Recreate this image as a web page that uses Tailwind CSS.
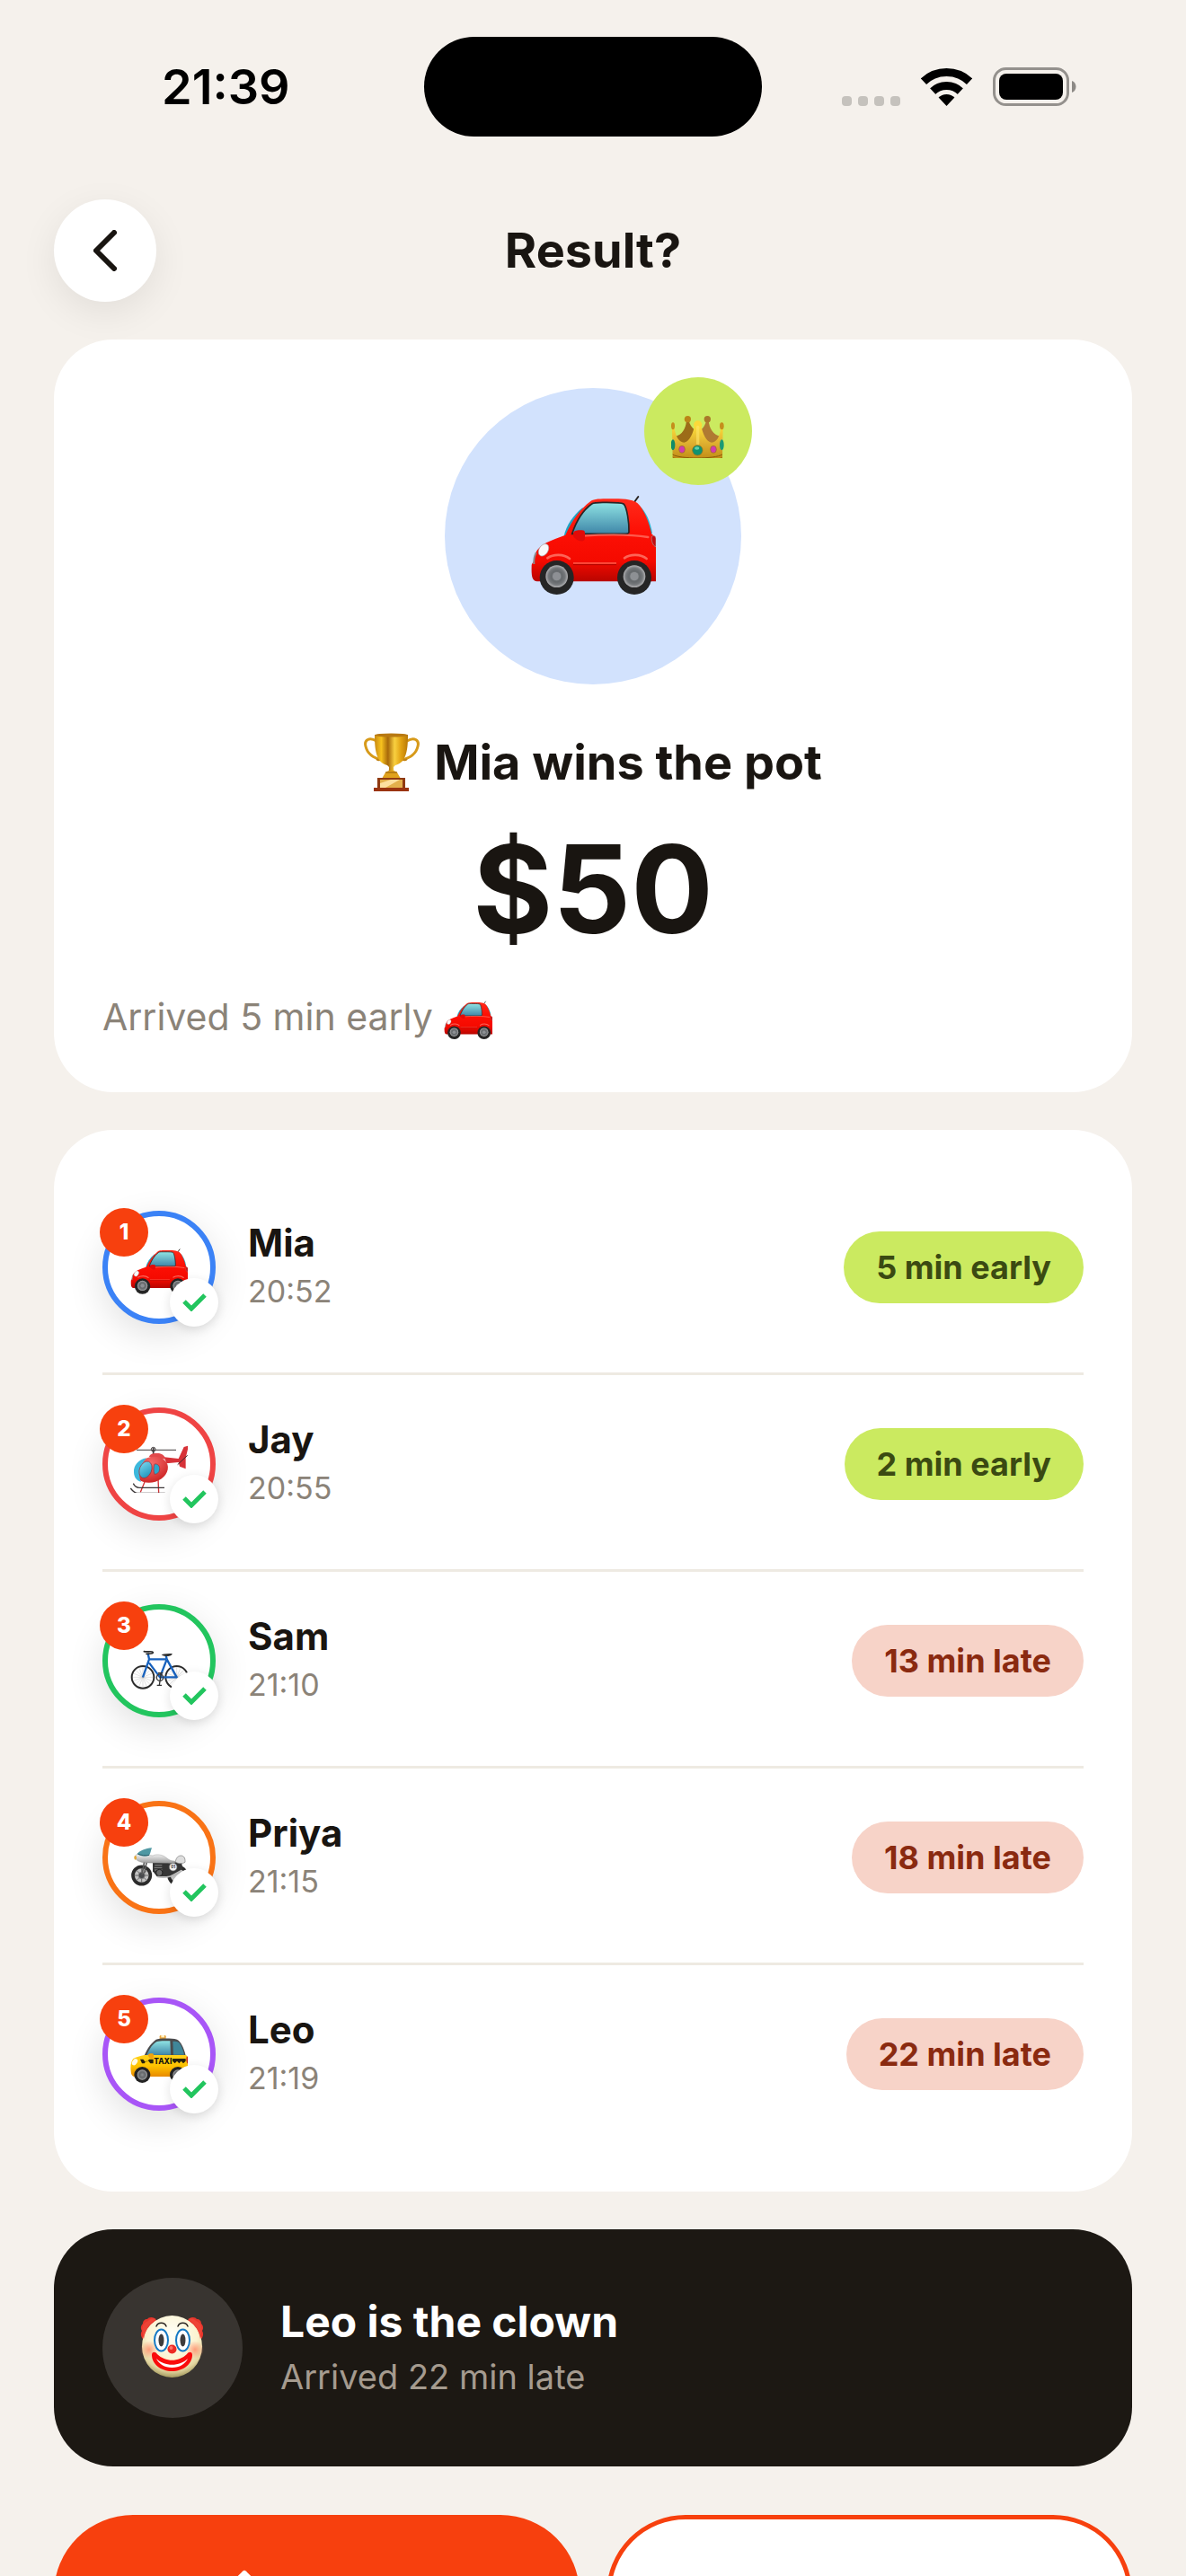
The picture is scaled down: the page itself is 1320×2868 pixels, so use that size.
<!DOCTYPE html>
<html lang="en">
<head>
  <meta charset="UTF-8">
  <meta name="viewport" content="width=device-width, initial-scale=1.0">
  <title>Result</title>
  <script src="https://cdn.jsdelivr.net/npm/@tailwindcss/browser@4"></script>
</head>
<body class="h-screen overflow-hidden bg-[#f5f1ec] font-['Inter',sans-serif] text-[#191511]">

  <!-- Shared pictures -->
  <svg class="absolute h-0 w-0" aria-hidden="true">
    <defs>
      <linearGradient id="glass" x1="0" y1="0" x2="0" y2="1">
        <stop offset="0" stop-color="#8fe3e3"/>
        <stop offset="1" stop-color="#3f86a8"/>
      </linearGradient>
      <linearGradient id="red" x1="0" y1="0" x2="0" y2="1">
        <stop offset="0" stop-color="#ff2a1a"/>
        <stop offset="0.4" stop-color="#fd1005"/>
        <stop offset="0.75" stop-color="#f50a00"/>
        <stop offset="1" stop-color="#b80500"/>
      </linearGradient>
      <linearGradient id="taxi" x1="0" y1="0" x2="0" y2="1">
        <stop offset="0" stop-color="#ffd21a"/>
        <stop offset="0.5" stop-color="#ffc400"/>
        <stop offset="1" stop-color="#e88a00"/>
      </linearGradient>
      <linearGradient id="gold" x1="0" y1="0" x2="1" y2="0">
        <stop offset="0" stop-color="#c98a10"/>
        <stop offset="0.2" stop-color="#f7c21e"/>
        <stop offset="0.4" stop-color="#a8690a"/>
        <stop offset="0.6" stop-color="#f9d040"/>
        <stop offset="0.8" stop-color="#e0a010"/>
        <stop offset="1" stop-color="#b87808"/>
      </linearGradient>
      <linearGradient id="crownGold" x1="0" y1="0" x2="0" y2="1">
        <stop offset="0" stop-color="#ffe23a"/>
        <stop offset="0.5" stop-color="#dfb030"/>
        <stop offset="1" stop-color="#bd8712"/>
      </linearGradient>
      <linearGradient id="silver" x1="0" y1="0" x2="0" y2="1">
        <stop offset="0" stop-color="#f4f4f4"/>
        <stop offset="1" stop-color="#9b9b9b"/>
      </linearGradient>
      <linearGradient id="bubble" x1="0" y1="0" x2="1" y2="1">
        <stop offset="0" stop-color="#7fdcf2"/>
        <stop offset="1" stop-color="#168bb4"/>
      </linearGradient>
      <radialGradient id="heliBody" cx="0.5" cy="0.25" r="0.7">
        <stop offset="0" stop-color="#f87070"/>
        <stop offset="1" stop-color="#d02a2a"/>
      </radialGradient>
      <radialGradient id="hub">
        <stop offset="0" stop-color="#8c8f92"/>
        <stop offset="0.5" stop-color="#65696c"/>
        <stop offset="0.75" stop-color="#75787b"/>
        <stop offset="1" stop-color="#b0b0b2"/>
      </radialGradient>
      <radialGradient id="face" cx="0.5" cy="0.3" r="0.7">
        <stop offset="0" stop-color="#fffff8"/>
        <stop offset="0.6" stop-color="#fbf3d0"/>
        <stop offset="0.85" stop-color="#e3d6a0"/>
        <stop offset="1" stop-color="#a59b60"/>
      </radialGradient>
      <radialGradient id="blush">
        <stop offset="0" stop-color="#ff8a68" stop-opacity="0.8"/>
        <stop offset="1" stop-color="#ff8a68" stop-opacity="0"/>
      </radialGradient>
      <clipPath id="signal"><path d="M28.500 42 -14 -3.500H71Z"/></clipPath>
    </defs>

    <symbol id="car" viewBox="330 381 420 420" overflow="visible">
      <path d="M676 480 691 459" stroke="#2b2523" stroke-width="6" stroke-linecap="round"/>
      <path d="M443 590c8-35 30-68 62-94l10 10-40 80z" fill="#1ea3c4"/>
      <path d="M695 490c20 15 38 55 43 92l-14 4-25-80z" fill="#28b5d0"/>
      <path d="M335 690c0-8 6-10 9-20 0-26 14-42 40-57 20-10 43-18 64-26 22-48 48-86 84-113 12-8 30-8 66-8 36 0 72 0 90 14 22 20 38 62 48 104 8 4 14 14 14 28v130H352c-16-2-18-20-17-52z" fill="url(#red)"/>
      <path d="M470 583c14-42 38-80 66-100 8-6 20-5 50-5 26 0 48 0 56 5 12 10 19 68 18 94 0 4-4 6-10 6z" fill="url(#glass)" stroke="#292526" stroke-width="5"/>
      <path d="M504 590c70-5 160-6 220 4" fill="none" stroke="#ff7a6c" stroke-width="7" stroke-linecap="round" opacity="0.7"/>
      <path d="M474 681h144" stroke="#ff5b4a" stroke-width="4"/>
      <path d="M474 686h144" stroke="#b00600" stroke-width="3"/>
      <path d="M350 646c-6 12-8 28-7 38" fill="none" stroke="#8b8b8f" stroke-width="6"/>
      <ellipse cx="375" cy="637" rx="15" ry="22" transform="rotate(32 375 637)" fill="#f8f8fa" stroke="#a9a4a8" stroke-width="2"/>
      <path d="M736 592c8-6 14 0 14 8v26c-10-2-16-20-14-34z" fill="#c20b10" stroke="#9f9b9c" stroke-width="2"/>
      <path d="M474 580c4-9 14-9 26-9 10 0 13 2 13 10v16c0 8-5 11-14 10-12-1-16-8-24-14z" fill="#e20a08"/>
      <path d="M388 664c20-14 54-14 74 2M645 664c20-14 54-14 74 2" fill="none" stroke="#ff8a7c" stroke-width="8" stroke-linecap="round" opacity="0.7"/>
      <circle cx="419" cy="729" r="57" fill="#252525"/>
      <circle cx="419" cy="725" r="37" fill="url(#hub)"/>
      <circle cx="419" cy="725" r="14" fill="#8d9094"/>
      <circle cx="678" cy="729" r="57" fill="#252525"/>
      <circle cx="678" cy="725" r="37" fill="url(#hub)"/>
      <circle cx="678" cy="725" r="14" fill="#8d9094"/>
    </symbol>

    <symbol id="crown" viewBox="801 150 180 180" overflow="visible">
      <path d="M814 258c24-6 36-26 38-54h8c2 14 10 24 20 32l-10 54h-50z" fill="#9c6c18"/>
      <path d="M966 258c-24-6-38-26-40-54h-8c-2 14-8 24-18 32l10 54h50z" fill="#b07a32"/>
      <circle cx="856" cy="200" r="11" fill="#bb8517"/>
      <circle cx="922" cy="200" r="11" fill="#a9782a"/>
      <path d="M804 232h8c4 24 14 46 32 46 18-2 30-30 36-60h20c6 30 18 58 36 60 18 0 28-22 30-46h8l-2 94c-20 20-146 20-166 0z" fill="url(#crownGold)"/>
      <circle cx="890" cy="219" r="14" fill="#fbd93a"/>
      <path d="M890 226v56" stroke="#ffe66a" stroke-width="10" stroke-linecap="round" opacity="0.6"/>
      <ellipse cx="807" cy="223" rx="6" ry="12" fill="#c58f1c"/>
      <ellipse cx="970" cy="223" rx="7" ry="12" fill="#c58f1c"/>
      <path d="M806 318c24 16 140 16 166 0" fill="none" stroke="#8a5c08" stroke-width="3"/>
      <path d="M806 325c24 18 140 18 166 0v4c-24 17-142 17-166 0z" fill="#a8740c"/>
      <ellipse cx="807" cy="286" rx="7" ry="18" fill="#118b68"/>
      <ellipse cx="970" cy="286" rx="7" ry="18" fill="#1a9b74"/>
      <ellipse cx="837" cy="301" rx="10" ry="12" fill="#d23ab0" stroke="#96701c" stroke-width="2"/>
      <ellipse cx="942" cy="301" rx="10" ry="12" fill="#d23ab0" stroke="#96701c" stroke-width="2"/>
      <circle cx="889" cy="304" r="17" fill="#0e9270" stroke="#96701c" stroke-width="2"/>
      <ellipse cx="887" cy="297" rx="8" ry="5" fill="#5fd0aa"/>
    </symbol>

    <symbol id="trophy" viewBox="0 0 62 66">
      <path d="M14 9C6 4 0 8 2 15c2 9 9 13 18 15M48 9c8-5 14-1 12 6-2 9-9 13-18 15" fill="none" stroke="#d79a1a" stroke-width="3"/>
      <path d="M14 29c3 3 6 0 4-3M48 29c-3 3-6 0-4-3" fill="none" stroke="#c08012" stroke-width="2"/>
      <path d="M12 2h37c0 15-1 31-14 34l-2 2c0 6 1 9 5 13H23c4-3 5-7 5-13l-2-2C13 33 12 17 12 2z" fill="url(#gold)"/>
      <ellipse cx="30.500" cy="2.500" rx="18.500" ry="2" fill="#b87912"/>
      <path d="M24 44c4-3 9-3 13 0l4 7H20z" fill="#e0a21c"/>
      <path d="M24 44h13" stroke="#8f5a08" stroke-width="1"/>
      <path d="M15 50h31v12H15z" fill="#8f3a10"/>
      <path d="M18 52h25v9H18z" fill="#e3b04c"/>
      <path d="M18 56 30 52h10L24 61h-6z" fill="#fde0a0"/>
      <path d="M11 61h39v4H11z" fill="#9a3410"/>
    </symbol>

    <symbol id="helicopter" viewBox="159 174 192 192" overflow="visible">
      <path d="M180 223h132" stroke="#403b3c" stroke-width="3"/>
      <path d="M236 216v22" stroke="#403b3c" stroke-width="5"/>
      <circle cx="236" cy="221" r="7" fill="none" stroke="#403b3c" stroke-width="3"/>
      <path d="M272 247 320 252 338 213 354 208 344 250 344 286 324 278 320 264 280 268z" fill="#d73238"/>
      <path d="M317 272 350 241" stroke="#37292b" stroke-width="3"/>
      <path d="M207 330 193 364M252 320 254 366" stroke="#cf2f33" stroke-width="4"/>
      <path d="M169 335c4 8 10 14 20 14h84M160 351c6 8 12 16 22 16h93" fill="none" stroke="#3c3738" stroke-width="4"/>
      <path d="M222 246c2-10 14-13 28-12 14 0 24 8 28 20z" fill="#e2494b"/>
      <ellipse cx="230" cy="289" rx="56" ry="42" transform="rotate(-18 230 289)" fill="url(#heliBody)"/>
      <path d="M213 250c-26 4-44 26-42 48 1 18 10 28 24 32-10-18-6-54 18-80z" fill="#3cb8dc"/>
      <ellipse cx="210" cy="289" rx="20" ry="29" transform="rotate(22 210 289)" fill="url(#bubble)" stroke="#a32a30" stroke-width="2"/>
      <path d="M240 270c10-2 18 6 17 18-1 10-8 16-17 16-4-10-4-24 0-34z" fill="#2aa6cc" stroke="#a32a30" stroke-width="2"/>
    </symbol>

    <symbol id="bicycle" viewBox="159 171 192 192" overflow="visible">
      <g fill="none" stroke="#a8a8a8" stroke-width="1">
        <path d="M201 285v74M164 322h74M175 296l52 52M175 348l52-52M187 288l28 68M187 356l28-68M167 308l68 28M167 336l68-28"/>
        <path d="M314 285v74M277 322h74M288 296l52 52M288 348l52-52M300 288l28 68M300 356l28-68M280 308l68 28M280 336l68-28"/>
      </g>
      <circle cx="201" cy="322" r="37" fill="none" stroke="#2c2c2c" stroke-width="6"/>
      <circle cx="314" cy="322" r="37" fill="none" stroke="#2c2c2c" stroke-width="6"/>
      <path d="M201 322 222 262 218 242M222 262H281M222 274 258 322 281 262M281 262 314 322H260M281 262 278 250" fill="none" stroke="#1761bd" stroke-width="7" stroke-linejoin="round"/>
      <path d="M205 236c10 2 20-1 27 1 6 2 2 6-4 6l-15 1" fill="none" stroke="#2a2a2a" stroke-width="5" stroke-linecap="round"/>
      <path d="M263 247c10-4 22-4 36-4 0 6-8 9-16 9-6 0-14 0-20-5z" fill="#303030"/>
      <circle cx="258" cy="323" r="11" fill="none" stroke="#3b3b3b" stroke-width="4"/>
      <path d="M262 310 256 348M248 349h16M252 308h16" stroke="#333" stroke-width="4"/>
    </symbol>

    <symbol id="motorcycle" viewBox="159 168 192 192" overflow="visible">
      <circle cx="197" cy="324" r="29" fill="#c4c4c4" stroke="#2b2b2b" stroke-width="11"/>
      <path d="M197 300v48M173 324h48M180 307l34 34M180 341l34-34" stroke="#6a6a6a" stroke-width="3"/>
      <circle cx="197" cy="324" r="11" fill="#484a4d" stroke="#888" stroke-width="3"/>
      <circle cx="317" cy="324" r="29" fill="#c4c4c4" stroke="#2b2b2b" stroke-width="11"/>
      <path d="M206 278 198 322M214 278 206 316" stroke="#5a5a5a" stroke-width="5"/>
      <path d="M234 280h96l4 22-46 26h-40l-14-18z" fill="#353535"/>
      <path d="M241 290h24M239 298h26M240 306h26" stroke="#8a8a8a" stroke-width="3"/>
      <circle cx="256" cy="315" r="11" fill="#6b6b6b" stroke="#1f1f1f" stroke-width="3"/>
      <path d="M250 328c24 6 56 0 82-20" fill="none" stroke="#b9b9b9" stroke-width="5"/>
      <path d="M174 262c2-8 8-10 18-9l42 5c12-6 32-4 44 6 10 8 16 12 30 12v6c-12 2-24 1-32 1l-62-1c-20 0-36-6-40-20z" fill="url(#silver)" stroke="#777" stroke-width="1"/>
      <path d="M310 278c2-14 10-20 18-20 10 0 15 8 14 22-10 6-24 6-32-2z" fill="#dedede" stroke="#777" stroke-width="2"/>
      <path d="M182 252c8-10 28-18 49-20-4 10-4 20-10 26-14 4-28 2-39-6z" fill="#4f98a3"/>
      <path d="M184 252c12 6 26 6 38 4" fill="none" stroke="#2b5f6b" stroke-width="3"/>
      <ellipse cx="176" cy="265" rx="4" ry="7" fill="#e5aa3c"/>
      <circle cx="302" cy="296" r="13" fill="#f3f3f3" stroke="#666" stroke-width="2"/>
      <text x="302" y="301" text-anchor="middle" font-size="13" font-weight="700" fill="#222">01</text>
    </symbol>

    <symbol id="taxi-cab" viewBox="159 165 192 192" overflow="visible">
      <rect x="257" y="198" width="21" height="14" rx="4" fill="#e8a43c"/>
      <rect x="262" y="198" width="11" height="7" fill="#fff0c2"/>
      <path d="M205 268c10-26 24-44 40-56 10-4 50-5 70 0 14 8 24 30 30 58z" fill="#4a4a4c"/>
      <path d="M214 264c8-20 20-38 34-45 8-3 28-3 44-2l2 46z" fill="url(#glass)"/>
      <path d="M301 218c10 0 17 0 21 5 8 10 14 26 17 40h-36z" fill="#3f8699"/>
      <path d="M161 318c-2-16 0-32 8-42 10-6 22-9 38-12h138c8 4 9 20 9 36v26c0 6-3 10-8 10H176c-10 0-14-6-15-18z" fill="url(#taxi)"/>
      <path d="M192 278h10l6 8h8l6-8h14v14h-10l-6-8h-8l-6 8h-8zM300 276h44v8l-8 8-7-8-7 8-7-8-7 8-8-8z" fill="#26210d"/>
      <text x="268" y="293" text-anchor="middle" font-size="25" font-weight="800" fill="#17140c">TAXI</text>
      <path d="M218 264c2-6 8-6 16-5 4 1 4 14 0 17-8 2-14-4-16-12z" fill="#f0a310"/>
      <ellipse cx="174" cy="287" rx="8" ry="12" transform="rotate(35 174 287)" fill="#fffbe8"/>
      <path d="M348 268c6 4 6 18 4 26-6-4-8-18-4-26z" fill="#c32a18"/>
      <circle cx="199" cy="330" r="27" fill="#232323"/>
      <circle cx="199" cy="330" r="17" fill="url(#hub)"/>
      <circle cx="318" cy="330" r="27" fill="#232323"/>
      <circle cx="318" cy="330" r="17" fill="url(#hub)"/>
    </symbol>

    <symbol id="clown" viewBox="0 0 72 72">
      <path d="M16 3c-3-2-7-1-8 1-3 0-5 2-5 5-2 2-3 5-1 8-2 3-1 7 1 9l3 2 14-20zM55 3c3-2 7-1 8 1 3 0 5 2 5 5 2 2 3 5 1 8 2 3 1 7-1 9l-3 2-14-20z" fill="#e8352b"/>
      <ellipse cx="35.500" cy="34.500" rx="33.500" ry="34.500" fill="url(#face)"/>
      <path d="M4 26c2-12 8-19 14-22-4-2-8 0-9 2-6 2-8 8-6 14zM67 26C65 14 59 7 53 4c4-2 8 0 9 2 6 2 8 8 6 14z" fill="#ee4336"/>
      <circle cx="10" cy="38" r="10" fill="url(#blush)"/>
      <circle cx="61" cy="38" r="10" fill="url(#blush)"/>
      <path d="M18 12c2-5 9-5 11 0M42 12c2-5 9-5 11 0" fill="none" stroke="#2a2522" stroke-width="1.500" stroke-linecap="round"/>
      <ellipse cx="23.500" cy="27.500" rx="7.500" ry="12" fill="#fff" stroke="#1579c4" stroke-width="2"/>
      <ellipse cx="47.500" cy="27.500" rx="7.500" ry="12" fill="#fff" stroke="#1579c4" stroke-width="2"/>
      <ellipse cx="23.500" cy="27.500" rx="3" ry="7" fill="#3d3b3b"/>
      <ellipse cx="47.500" cy="27.500" rx="3" ry="7" fill="#3d3b3b"/>
      <path d="M13 44c0-4 4-4 6-1 9 9 24 9 33 0 2-3 6-3 6 1 0 10-10 18-22.500 18S13 54 13 44z" fill="#fa0c0c"/>
      <path d="M18 48c9 9 26 9 35 0-3 6-9 10-17.500 10S21 54 18 48z" fill="#fff"/>
      <circle cx="35.500" cy="37.500" r="5" fill="#ee2a24"/>
      <circle cx="34.500" cy="36" r="2" fill="#ff7468"/>
    </symbol>

    <symbol id="check" viewBox="0 0 27 20">
      <path d="M2 9 10 17 25 2" fill="none" stroke="#22c55e" stroke-width="5"/>
    </symbol>
  </svg>

  <div class="flex h-full flex-col">
    <!-- Status bar -->
    <div class="grid shrink-0 grid-cols-[1fr_376px_1fr] items-center pt-[41px] pb-[70px]">
      <div class="pl-[180px] text-[54px] leading-[60px] font-semibold text-black">21:39</div>
      <div class="h-[111px] rounded-full bg-black"></div>
      <div class="flex items-end justify-end gap-[23px] pr-[122px]">
        <div class="flex gap-[7px]">
          <span class="size-[11px] rounded-[4px] bg-[#c5c2bd]"></span>
          <span class="size-[11px] rounded-[4px] bg-[#c5c2bd]"></span>
          <span class="size-[11px] rounded-[4px] bg-[#c5c2bd]"></span>
          <span class="size-[11px] rounded-[4px] bg-[#c5c2bd]"></span>
        </div>
        <svg class="h-[42px] w-[57px]" viewBox="0 0 57 42" aria-hidden="true">
          <g clip-path="url(#signal)">
            <circle cx="28.500" cy="42" r="37.500" fill="none" stroke="#000" stroke-width="9"/>
            <circle cx="28.500" cy="42" r="22.500" fill="none" stroke="#000" stroke-width="9"/>
            <circle cx="28.500" cy="42" r="13" fill="#000"/>
          </g>
        </svg>
        <svg class="h-[43px] w-[93px]" viewBox="0 0 93 43" aria-hidden="true">
          <rect x="1.500" y="1.500" width="82" height="40" rx="13" fill="none" stroke="#94918d" stroke-width="3"/>
          <rect x="7" y="7" width="71" height="29" rx="8" fill="#000"/>
          <path d="M88 15c6 2 6 11 0 13z" fill="#8d8a86"/>
        </svg>
      </div>
    </div>

    <header class="flex shrink-0 items-center justify-between px-[60px] pb-[42px]">
      <button type="button" aria-label="Back" class="flex size-[114px] items-center justify-center rounded-full bg-white shadow-[0_12px_42px_rgba(0,0,0,0.08)]">
        <svg class="h-[46px] w-[26px]" viewBox="0 0 26 46" fill="none" stroke="#191511" stroke-width="6" stroke-linecap="round" stroke-linejoin="round" aria-hidden="true"><path d="M23 3 3 23 23 43"/></svg>
      </button>
      <h1 class="text-[54px] leading-[66px] font-bold">Result?</h1>
      <div class="w-[114px]"></div>
    </header>

    <main class="flex flex-col gap-[42px] px-[60px]">
      <!-- Winner -->
      <section class="flex flex-col items-center rounded-[66px] bg-white p-[54px]">
        <div class="relative flex size-[330px] items-center justify-center rounded-full bg-[#d2e2fd]">
          <svg class="size-[140px]" role="img" aria-label="Car"><use href="#car"/></svg>
          <div class="absolute -top-3 -right-3 flex size-[120px] items-center justify-center rounded-full bg-[#cbea60]">
            <svg class="size-[60px]" role="img" aria-label="Crown"><use href="#crown"/></svg>
          </div>
        </div>
        <h2 class="mt-[54px] flex items-center gap-4 text-[54px] leading-[66px] font-bold">
          <svg class="h-[66px] w-[62px]" role="img" aria-label="Trophy"><use href="#trophy"/></svg>
          Mia wins the pot
        </h2>
        <p class="mt-[30px] text-[136px] leading-[156px] font-bold">$50</p>
        <p class="mt-[34px] flex items-center gap-3 self-start text-[41px] leading-[60px] text-[#8b8378]">
          Arrived 5 min early
          <svg class="size-[54px]" role="img" aria-label="Car"><use href="#car"/></svg>
        </p>
      </section>

      <!-- Ranking -->
      <section class="rounded-[66px] bg-white p-[54px]">
        <ol id="ranking" class="flex flex-col gap-[18px]"></ol>
      </section>

      <!-- Last place -->
      <section class="flex items-center gap-[42px] rounded-[66px] bg-[#1c1813] p-[54px]">
        <div class="flex size-[156px] items-center justify-center rounded-full bg-[#383430]">
          <svg class="size-[72px]" role="img" aria-label="Clown"><use href="#clown"/></svg>
        </div>
        <div>
          <h2 class="text-[48px] leading-[60px] font-bold text-white">Leo is the clown</h2>
          <p class="mt-1 text-[38px] leading-[54px] text-[#a59b8f]">Arrived 22 min late</p>
        </div>
      </section>

      <div class="mt-3 grid grid-cols-2 gap-[30px]">
        <button type="button" class="flex h-[176px] items-center justify-center gap-6 rounded-full bg-[#f7400e] text-[48px] leading-[60px] font-bold text-white">
          <svg class="h-[54px] w-[42px]" viewBox="0 0 42 54" fill="none" stroke="currentColor" stroke-width="6" stroke-linecap="round" stroke-linejoin="round" aria-hidden="true"><path d="M21 34V4M10 15 21 4 32 15M4 28v22h34V28"/></svg>
          Share
        </button>
        <button type="button" aria-label="Rematch" class="h-[176px] rounded-full border-5 border-[#f7400e] bg-white"></button>
      </div>
    </main>
  </div>

  <script>
    const early = 'bg-[#cbea60] text-[#3b4a12]';
    const late = 'bg-[#f7d3c8] text-[#8a2a10]';

    const players = [
      { name: 'Mia', time: '20:52', result: '5 min early', icon: 'car', ring: 'border-[#3b82f6]', pill: early },
      { name: 'Jay', time: '20:55', result: '2 min early', icon: 'helicopter', ring: 'border-[#ef4444]', pill: early },
      { name: 'Sam', time: '21:10', result: '13 min late', icon: 'bicycle', ring: 'border-[#22c55e]', pill: late },
      { name: 'Priya', time: '21:15', result: '18 min late', icon: 'motorcycle', ring: 'border-[#f97316]', pill: late },
      { name: 'Leo', time: '21:19', result: '22 min late', icon: 'taxi-cab', ring: 'border-[#a855f7]', pill: late }
    ];

    document.getElementById('ranking').innerHTML = players.map((player, index) => `
      <li class="flex items-center border-[#eeeae2] py-9 not-first:border-t-3">
        <div class="relative flex size-[126px] items-center justify-center rounded-full border-6 bg-white shadow-[0_12px_42px_rgba(0,0,0,0.12)] ${player.ring}">
          <svg class="size-16" aria-hidden="true"><use href="#${player.icon}"/></svg>
          <span class="absolute -top-[9px] -left-[9px] flex size-[54px] items-center justify-center rounded-full bg-[#f7400e] text-2xl font-extrabold text-white">${index + 1}</span>
          <span class="absolute -right-[9px] -bottom-[9px] flex size-[54px] items-center justify-center rounded-full bg-white shadow-[0_3px_12px_rgba(0,0,0,0.12)]">
            <svg class="h-5 w-[27px]" aria-hidden="true"><use href="#check"/></svg>
          </span>
        </div>
        <div class="ml-9 flex-1">
          <p class="text-[42px] leading-[54px] font-bold">${player.name}</p>
          <p class="text-[34px] leading-[54px] text-[#8b8378]">${player.time}</p>
        </div>
        <span class="rounded-full px-9 text-[36px] leading-[80px] font-bold ${player.pill}">${player.result}</span>
      </li>
    `).join('');
  </script>
</body>
</html>
